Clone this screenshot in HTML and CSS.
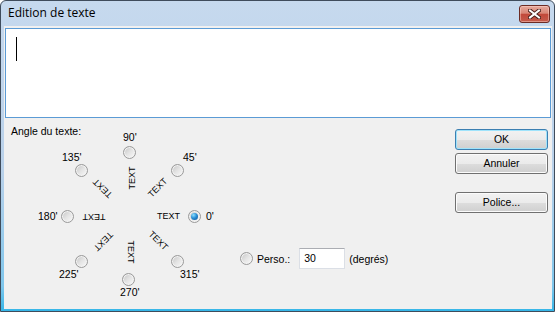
FILE: index.html
```
<!DOCTYPE html>
<html lang="fr">
<head>
    <meta charset="UTF-8">
    <title>Edition de texte</title>
    <link rel="stylesheet" href="styles.css">
</head>
<body>
    <div class="window">
        <div class="titlebar">
            <span class="title">Edition de texte</span>
            <div class="close">
                <svg width="13" height="10" viewBox="0 0 13 10">
                    <path d="M2 1.5 L11 8.5 M11 1.5 L2 8.5" stroke="#4a1f1a" stroke-width="4" stroke-linecap="square" />
                    <path d="M2 1.5 L11 8.5 M11 1.5 L2 8.5" stroke="#ffffff" stroke-width="2" stroke-linecap="square" />
                </svg>
            </div>
        </div>

        <div class="client">
            <div class="edit"><span class="caret"></span></div>

            <div class="lower">
                <div class="angle">
                    <div class="angle-label">Angle du texte:</div>
                    <div class="dial-row">
                        <div class="dial">
                            <!-- labels des angles -->
                            <span class="deg d90">90'</span>
                            <span class="deg d135">135'</span>
                            <span class="deg d45">45'</span>
                            <span class="deg d180">180'</span>
                            <span class="deg d0">0'</span>
                            <span class="deg d225">225'</span>
                            <span class="deg d270">270'</span>
                            <span class="deg d315">315'</span>

                            <!-- boutons radio -->
                            <span class="radio r90"></span>
                            <span class="radio r135"></span>
                            <span class="radio r45"></span>
                            <span class="radio r180"></span>
                            <span class="radio checked r0"></span>
                            <span class="radio r225"></span>
                            <span class="radio r270"></span>
                            <span class="radio r315"></span>

                            <!-- apercu du texte -->
                            <span class="sample t90">TEXT</span>
                            <span class="sample t45">TEXT</span>
                            <span class="sample t135">TEXT</span>
                            <span class="sample t180">TEXT</span>
                            <span class="sample t0">TEXT</span>
                            <span class="sample t225">TEXT</span>
                            <span class="sample t270">TEXT</span>
                            <span class="sample t315">TEXT</span>
                        </div>

                        <div class="perso">
                            <span class="radio"></span>
                            <span class="perso-label">Perso.:</span>
                            <span class="num">30</span>
                            <span class="unit">(degrés)</span>
                        </div>
                    </div>
                </div>

                <div class="buttons">
                    <div class="btn default">OK</div>
                    <div class="btn cancel">Annuler</div>
                    <div class="btn font">Police...</div>
                </div>
            </div>
        </div>
    </div>
</body>
</html>
```

FILE: styles.css
```
body {
    margin: 0;
    width: 555px;
    height: 312px;
    overflow: hidden;
    background: #ffffff;
    font-family: 'Liberation Sans', Arial, sans-serif;
    font-size: 10.5px;
    color: #000;
}

.window {
    box-sizing: border-box;
    width: 555px;
    height: 312px;
    border: 1px solid #3f4c5c;
    border-radius: 6px 6px 0 0;
    background: linear-gradient(to bottom, #c6d9ee 0%, #b9d1ea 55%, #7fc6ec 92%, #35b6e8 100%);
    display: flex;
    flex-direction: column;
}

.titlebar {
    height: 25px;
    display: flex;
    align-items: flex-start;
    padding-left: 7px;
}

.title {
    font-family: 'Open Sans', 'Noto Sans', sans-serif;
    font-size: 12px;
    line-height: 16px;
    margin-top: 4px;
    color: #000;
}

.close {
    box-sizing: border-box;
    margin-left: auto;
    margin-right: 4px;
    margin-top: 4px;
    width: 31px;
    height: 18px;
    border: 1px solid #6c2b24;
    border-radius: 3px;
    background: linear-gradient(to bottom, #e6a99d 0%, #d98676 45%, #c2493a 52%, #c55b4c 100%);
    box-shadow: inset 0 0 0 1px rgba(255, 220, 210, 0.45);
    display: flex;
    align-items: center;
    justify-content: center;
}

.client {
    flex: 1;
    margin: 0 2px 2px 3px;
    background: #f0f0f0;
    display: flex;
    flex-direction: column;
}

.edit {
    box-sizing: border-box;
    height: 90px;
    margin: 2px 1px 0 1px;
    border: 1px solid #5b9bd5;
    background: #ffffff;
    padding: 8px 0 0 10px;
}

.caret {
    display: block;
    width: 1px;
    height: 24px;
    background: #000;
}

.lower {
    flex: 1;
    display: flex;
}

.angle {
    flex: 1;
    padding: 7px 0 0 7px;
}

.angle-label {
    line-height: 12px;
}

.dial-row {
    display: flex;
    align-items: flex-start;
}

.dial {
    position: relative;
    width: 190px;
    height: 165px;
    margin-left: 19px;
}

/* labels des angles */
.deg {
    position: absolute;
    line-height: 12px;
    white-space: nowrap;
}
.d90 { left: 93px; top: -6px; }
.d135 { left: 32px; top: 14px; }
.d45 { left: 153px; top: 14px; }
.d180 { left: 8px; top: 73px; }
.d0 { left: 176px; top: 73px; }
.d225 { left: 29px; top: 131px; }
.d270 { left: 90px; top: 149px; }
.d315 { left: 150px; top: 131px; }

.radio {
    box-sizing: border-box;
    display: block;
    width: 13px;
    height: 13px;
    border-radius: 50%;
    border: 1px solid #9a9a9a;
    background: linear-gradient(135deg, #c4c4c4 0%, #e4e4e4 50%, #fafafa 100%);
    box-shadow: inset 0 0 0 1px #f3f3f3;
    position: relative;
}

.dial .radio {
    position: absolute;
}

.radio.checked::after {
    content: "";
    position: absolute;
    left: 2px;
    top: 2px;
    width: 7px;
    height: 7px;
    border-radius: 50%;
    background: radial-gradient(circle at 35% 30%, #8fe0ff 0%, #2a8fd6 45%, #0b4f95 100%);
}

.r90 { left: 93px; top: 9px; }
.r135 { left: 45px; top: 27px; }
.r45 { left: 141px; top: 27px; }
.r180 { left: 31px; top: 73px; }
.r0 { left: 158px; top: 73px; }
.r225 { left: 45px; top: 118px; }
.r270 { left: 92px; top: 136px; }
.r315 { left: 141px; top: 118px; }

/* apercu du texte tourne */
.sample {
    position: absolute;
    font-size: 9px;
    line-height: 9px;
    white-space: nowrap;
}
.t90 { left: 101.5px; top: 41px; transform: translate(-50%, -50%) rotate(-90deg); }
.t45 { left: 127.5px; top: 50.5px; transform: translate(-50%, -50%) rotate(-45deg); }
.t135 { left: 72.5px; top: 51px; transform: translate(-50%, -50%) rotate(-135deg); }
.t180 { left: 63.5px; top: 78.5px; transform: translate(-50%, -50%) rotate(180deg); }
.t0 { left: 138.5px; top: 78.5px; transform: translate(-50%, -50%); }
.t225 { left: 72.5px; top: 104px; transform: translate(-50%, -50%) rotate(135deg); }
.t270 { left: 100px; top: 115px; transform: translate(-50%, -50%) rotate(90deg); }
.t315 { left: 127.5px; top: 103.5px; transform: translate(-50%, -50%) rotate(45deg); }

.perso {
    display: flex;
    align-items: center;
    margin: 111px 0 0 20px;
}

.perso-label {
    margin-left: 4px;
}

.num {
    box-sizing: border-box;
    width: 46px;
    height: 21px;
    margin-left: 9px;
    padding: 0 4px;
    line-height: 19px;
    background: #ffffff;
    border: 1px solid #dbdfe6;
    border-top-color: #abadb3;
}

.unit {
    margin-left: 4px;
}

.buttons {
    display: flex;
    flex-direction: column;
    padding: 11px 4px 0 0;
}

.btn {
    box-sizing: border-box;
    width: 93px;
    height: 21px;
    border: 1px solid #707070;
    border-radius: 3px;
    background: linear-gradient(to bottom, #f2f2f2 0%, #ebebeb 50%, #dddddd 51%, #cfcfcf 100%);
    box-shadow: inset 0 0 0 1px #fbfbfb;
    text-align: center;
    line-height: 19px;
}

.btn.default {
    border-color: #3c7fb1;
    box-shadow: inset 0 0 0 1px #9fe3fb;
}

.btn.cancel {
    margin-top: 3px;
}

.btn.font {
    margin-top: 18px;
}
```
